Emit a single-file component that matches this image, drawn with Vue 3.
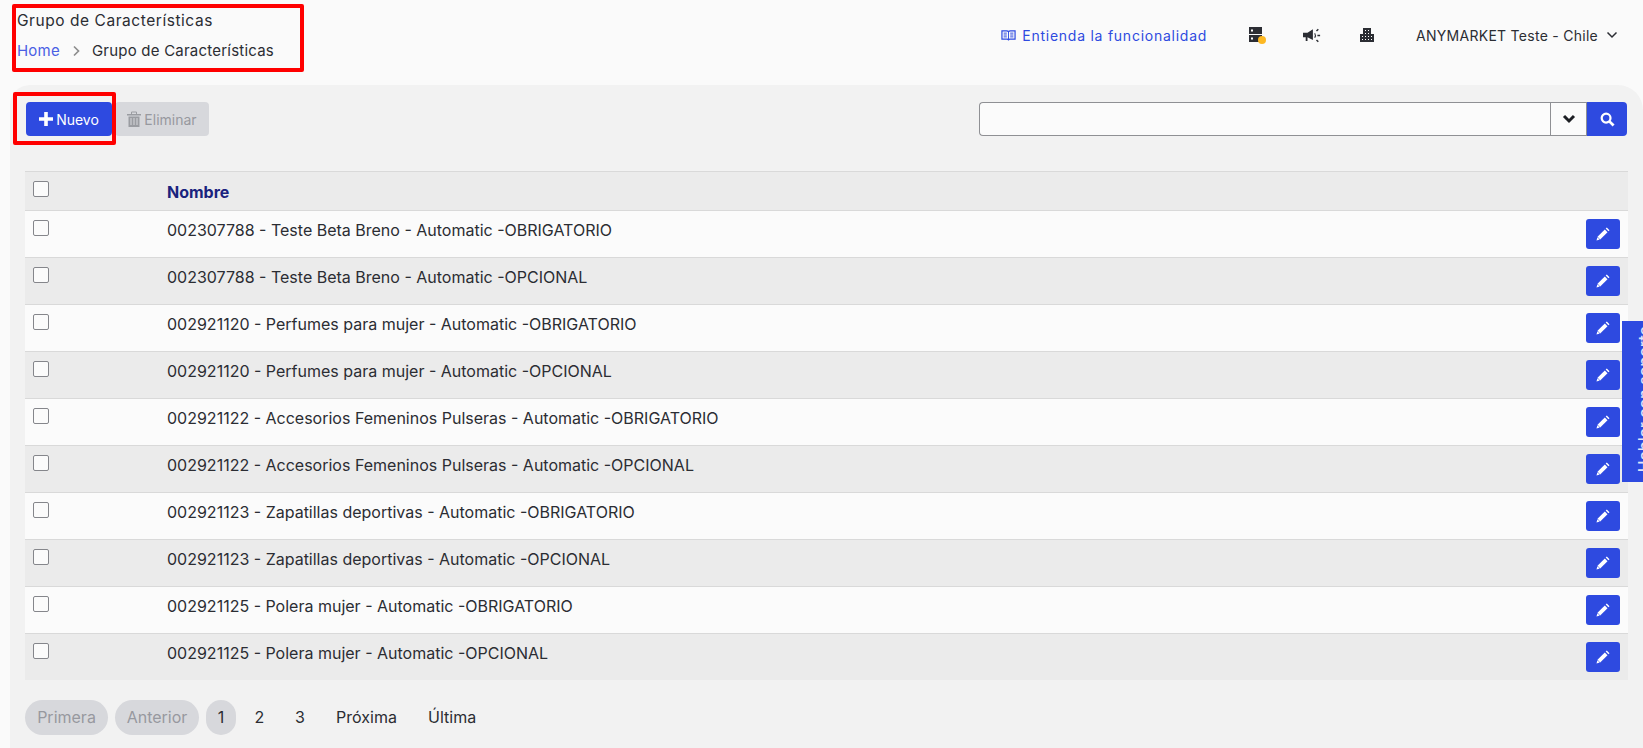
<script setup>
const rows = [
  '002307788 - Teste Beta Breno - Automatic -OBRIGATORIO',
  '002307788 - Teste Beta Breno - Automatic -OPCIONAL',
  '002921120 - Perfumes para mujer - Automatic -OBRIGATORIO',
  '002921120 - Perfumes para mujer - Automatic -OPCIONAL',
  '002921122 - Accesorios Femeninos Pulseras - Automatic -OBRIGATORIO',
  '002921122 - Accesorios Femeninos Pulseras - Automatic -OPCIONAL',
  '002921123 - Zapatillas deportivas - Automatic -OBRIGATORIO',
  '002921123 - Zapatillas deportivas - Automatic -OPCIONAL',
  '002921125 - Polera mujer - Automatic -OBRIGATORIO',
  '002921125 - Polera mujer - Automatic -OPCIONAL'
]
const buildingDots = [
  [5, 2], [8, 2], [5, 5], [8, 5],
  [2, 8], [5, 8], [8, 8], [11, 8],
  [2, 11], [5, 11], [8, 11], [11, 11]
]
</script>

<template>
  <div class="page">
    <header class="topbar">
      <div class="heading">
        <h1 class="title">Grupo de Características</h1>
        <nav class="crumbs">
          <a class="home">Home</a>
          <svg class="crumb-sep" viewBox="0 0 10 12" width="10" height="12"><path d="M3 1.500 7.500 6 3 10.500" fill="none" stroke="#8d8d8d" stroke-width="1.700"/></svg>
          <span>Grupo de Características</span>
        </nav>
      </div>
      <div class="top-actions">
        <a class="help">
          <svg viewBox="0 0 16 12" width="15" height="12"><path d="M1 1.500h5c1 0 1.700.4 2 1 .3-.6 1-1 2-1h5v9h-5.500c-.7 0-1.200.2-1.500.6-.3-.4-.8-.6-1.500-.6H1z" fill="none" stroke="#2e4ae0" stroke-width="1.300"/><path d="M8 2.500v8M2.800 4h3.400M2.800 6h3.400M2.800 8h3.400M9.800 4h3.400M9.800 6h3.400M9.800 8h3.400" stroke="#2e4ae0" stroke-width="1"/></svg>
          <span>Entienda la funcionalidad</span>
        </a>
        <svg class="icon-server" viewBox="0 0 18 18" width="18" height="18"><rect x="0" y="1" width="13" height="7" fill="#2b2d33"/><rect x="0" y="9" width="13" height="7" fill="#2b2d33"/><rect x="2" y="3.500" width="2" height="2" fill="#fff"/><rect x="2" y="11.500" width="2" height="2" fill="#fff"/><circle cx="13" cy="14" r="4" fill="#fdb822"/></svg>
        <svg class="icon-mega" viewBox="0 0 20 16" width="18" height="15"><path d="M0 5h5l6-4v12L5 10v4H3v-4H0z" fill="#2b2d33"/><path d="M13 5.500c1 1.500 1 3.500 0 5" fill="none" stroke="#2b2d33" stroke-width="1.200"/><path d="M15 3l2-2M16 8h3M15 13l2 2" stroke="#2b2d33" stroke-width="1.600"/></svg>
        <svg class="icon-building" viewBox="0 0 14 14" width="14" height="14">
          <path d="M3 0h8v6h3v8H0V6h3z" fill="#2b2d33"/>
          <rect v-for="(d, i) in buildingDots" :key="i" :x="d[0]" :y="d[1]" width="1" height="1" fill="#fff"/>
        </svg>
        <div class="account">
          <span>ANYMARKET Teste - Chile</span>
          <svg viewBox="0 0 12 8" width="12" height="8"><path d="M1.500 1.500 6 6l4.500-4.500" fill="none" stroke="#2b2d33" stroke-width="1.500"/></svg>
        </div>
      </div>
    </header>

    <main class="panel">
      <div class="toolbar">
        <div class="actions">
          <button class="btn primary">
            <svg viewBox="0 0 14 14" width="14" height="14"><path d="M7 0v14M0 7h14" stroke="#fff" stroke-width="3.600"/></svg>
            Nuevo
          </button>
          <button class="btn disabled">
            <svg viewBox="0 0 14 16" width="14" height="16"><path d="M0 3h14v1.500H0zM1.500 5.500h11V16h-11z" fill="#9a9ca1"/><path d="M4 7v7M7 7v7M10 7v7" stroke="#d7d8dc" stroke-width="1"/><path d="M4.500 3V1h5v2" fill="none" stroke="#9a9ca1" stroke-width="1"/></svg>
            Eliminar
          </button>
        </div>
        <div class="search">
          <input class="search-input" />
          <span class="search-drop">
            <svg viewBox="0 0 14 10" width="14" height="10"><path d="M2 2l5 5 5-5" fill="none" stroke="#1d1f24" stroke-width="3"/></svg>
          </span>
          <button class="search-btn">
            <svg viewBox="0 0 16 16" width="15" height="15"><circle cx="6.500" cy="6.500" r="4.700" fill="none" stroke="#fff" stroke-width="2.400"/><path d="M10 10l4.500 4.500" stroke="#fff" stroke-width="3"/></svg>
          </button>
        </div>
      </div>

      <section class="table">
        <div class="row head">
          <span class="check"></span>
          <span class="name-head">Nombre</span>
        </div>
        <div v-for="(r, i) in rows" :key="i" class="row" :class="i % 2 ? 'even' : 'odd'">
          <span class="check"></span>
          <span class="name">{{ r }}</span>
          <button class="edit">
            <svg viewBox="0 0 14 14" width="14" height="14"><path d="M1.500 9.800 8.800 2.500l2.700 2.700-7.300 7.300z" fill="#fff"/><path d="M9.700 1.600 10.800.5l2.700 2.700-1.100 1.100z" fill="#fff"/><path d="M.5 13.500l.9-3.200 2.300 2.300z" fill="#fff"/></svg>
          </button>
        </div>
      </section>

      <nav class="pager">
        <span class="pg off">Primera</span>
        <span class="pg off">Anterior</span>
        <span class="pg current">1</span>
        <span class="pg num first">2</span>
        <span class="pg num">3</span>
        <span class="pg link next">Próxima</span>
        <span class="pg link last">Última</span>
      </nav>
    </main>

    <div class="support"><span>Hablar con soporte</span></div>
    <div class="mark mark-head"></div>
    <div class="mark mark-new"></div>
  </div>
</template>

<style>
html, body { margin: 0; background: #fafafa; }
</style>

<style scoped>
.page {
  position: relative;
  width: 1643px;
  height: 748px;
  overflow: hidden;
  background: #fafafa;
  color: #2b2d33;
  font-family: Inter, "Noto Sans", sans-serif;
}
.topbar {
  height: 85px;
  display: flex;
  justify-content: space-between;
  box-sizing: border-box;
  padding-left: 17px;
}
.title {
  margin: 11px 0 0;
  font-size: 15.500px;
  line-height: 20px;
  font-weight: 400;
  letter-spacing: 0.55px;
}
.crumbs {
  margin-top: 11px;
  display: flex;
  align-items: center;
  font-size: 15px;
  line-height: 18px;
  letter-spacing: 0.22px;
}
.home { color: #4a5fe4; }
.crumb-sep { margin: 0 11px; }
.top-actions {
  display: flex;
  align-items: center;
  height: 70px;
  padding-right: 25px;
  font-size: 14px;
  letter-spacing: 0.27px;
}
.help {
  display: flex;
  align-items: center;
  gap: 6px;
  color: #2e4ae0;
  letter-spacing: 0.75px;
}
.icon-server { margin-left: 42px; }
.icon-mega { margin-left: 36px; }
.icon-building { margin-left: 39px; }
.account {
  margin-left: 42px;
  display: flex;
  align-items: center;
  gap: 8px;
}
.panel {
  margin-left: 10px;
  height: 663px;
  box-sizing: border-box;
  padding: 17px 15px 0;
  background: #f2f2f2;
  border-radius: 20px 25px 0 0;
}
.toolbar {
  display: flex;
  justify-content: space-between;
  height: 34px;
  margin-bottom: 35px;
}
.actions { display: flex; gap: 3px; margin-left: 1px; }
.btn {
  height: 34px;
  border: 0;
  border-radius: 4px;
  display: flex;
  align-items: center;
  justify-content: center;
  gap: 3px;
  font: 400 14px Inter, sans-serif;
  padding: 0;
}
.primary { width: 86px; background: #2e4ae0; color: #fff; }
.disabled { width: 94px; background: #d7d8dc; color: #97999f; }
.search { display: flex; width: 648px; height: 34px; margin-right: 1px; }
.search-input {
  flex: 1;
  min-width: 0;
  box-sizing: border-box;
  border: 1px solid #8f9094;
  border-right: 0;
  border-radius: 4px 0 0 4px;
  background: #fbfbfb;
  outline: 0;
}
.search-drop {
  width: 37px;
  box-sizing: border-box;
  border: 1px solid #8f9094;
  display: flex;
  align-items: center;
  justify-content: center;
  background: #fbfbfb;
}
.search-btn {
  width: 40px;
  border: 0;
  border-radius: 0 4px 4px 0;
  background: #2e4ae0;
  display: flex;
  align-items: center;
  justify-content: center;
  padding: 0;
}
.table { border-top: 1px solid #d9d9d9; }
.row {
  display: grid;
  grid-template-columns: 134px 1fr 34px;
  box-sizing: border-box;
  height: 47px;
  padding: 0 8px;
  border-top: 1px solid #d9d9d9;
  position: relative;
}
.head {
  height: 38px;
  border-top: 0;
  background: #ebebeb;
  align-items: start;
}
.odd { background: #fbfbfb; }
.even { background: #ebebeb; }
.check {
  display: block;
  width: 16px;
  height: 16px;
  box-sizing: border-box;
  margin-top: 9px;
  border: 1px solid #85868b;
  border-radius: 2px;
  background: #fbfbfb;
}
.name-head {
  margin-top: 10px;
  font-size: 16px;
  line-height: 20px;
  font-weight: 700;
  color: #1a237e;
}
.name {
  margin-top: 9px;
  font-size: 16px;
  line-height: 20px;
}
.edit {
  width: 34px;
  height: 30px;
  margin-top: 8px;
  border: 0;
  border-radius: 3px;
  background: #2e4ae0;
  display: flex;
  align-items: center;
  justify-content: center;
  padding: 0;
}
.pager {
  margin-top: 20px;
  display: flex;
  align-items: center;
  font-size: 16px;
}
.pg {
  height: 35px;
  line-height: 35px;
  border-radius: 18px;
  text-align: center;
}
.off { background: #d7d8dc; color: #97999f; margin-right: 7px; }
.off:nth-child(1) { width: 83px; }
.off:nth-child(2) { width: 84px; }
.current { width: 30px; background: #d7d8dc; }
.num { width: 34px; }
.first { width: 47px; }
.next { width: 61px; margin-left: 19px; }
.last { width: 48px; margin-left: 31px; }
.support {
  position: absolute;
  top: 321px;
  right: 0;
  width: 21px;
  height: 161px;
  background: #2e4ae0;
  overflow: hidden;
}
.support span {
  position: absolute;
  left: 12px;
  bottom: 10px;
  writing-mode: vertical-rl;
  transform: rotate(180deg);
  white-space: nowrap;
  color: #dfe4fb;
  font-size: 16px;
  line-height: 20px;
  font-weight: 500;
}
.mark {
  position: absolute;
  box-sizing: border-box;
  border: 4px solid #ff0000;
  border-radius: 2px;
  pointer-events: none;
}
.mark-head { left: 12px; top: 4px; width: 292px; height: 68px; }
.mark-new { left: 13px; top: 92px; width: 103px; height: 53px; }
</style>
